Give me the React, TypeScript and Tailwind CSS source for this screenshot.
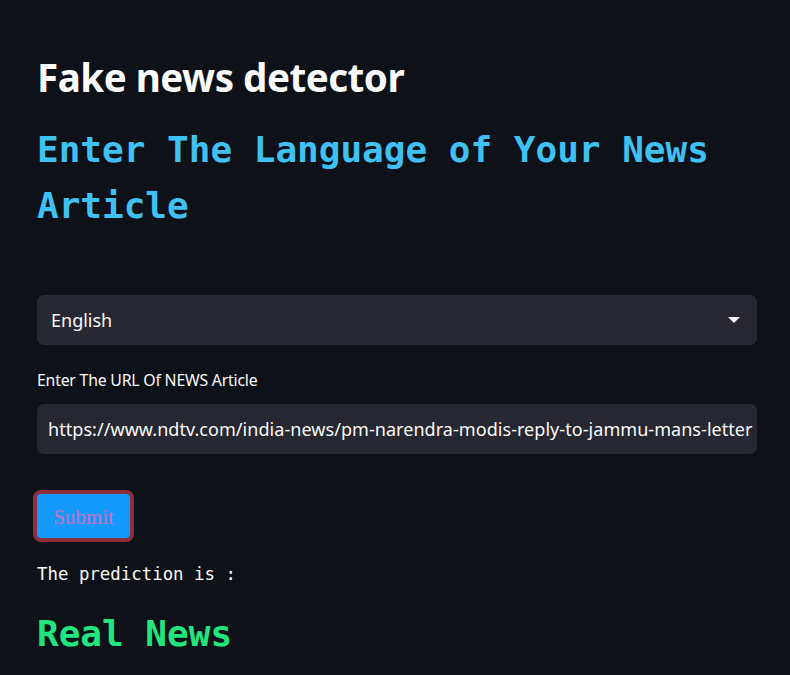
import React from "react";

export default function App() {
  return (
    <div className="min-h-[675px] w-full bg-[#0e1117] text-white">
      <div className="px-[37px] pt-[52px]">
        <h1 className="text-[38.6px] font-bold leading-[50px] text-[#fafafa] [font-family:'Noto_Sans',sans-serif] tracking-[-0.5px]">
          Fake news detector
        </h1>
        <h2 className="mt-[20px] text-[36px] font-bold leading-[56px] text-[#3fc1f3] [font-family:'DejaVu_Sans_Mono',monospace]">
          Enter The Language of Your News Article
        </h2>
        <div className="mt-[61px] flex h-[50px] w-[720px] items-center justify-between rounded-[7px] bg-[#262730] pl-[14px] pr-[17px]">
          <span className="text-[18px] text-[#fafafa] [font-family:'Noto_Sans',sans-serif]">English</span>
          <svg width="12" height="7" viewBox="0 0 12 7">
            <path d="M0 0 L12 0 L6 6 Z" fill="#fafafa" />
          </svg>
        </div>
        <div className="mt-[24px] text-[15.8px] leading-[22px] text-[#fafafa] [font-family:'Noto_Sans',sans-serif] tracking-[-0.2px]">
          Enter The URL Of NEWS Article
        </div>
        <div className="mt-[13px] flex h-[50px] w-[720px] items-center overflow-hidden rounded-[7px] bg-[#262730] pl-[11px] pr-[2px]">
          <span className="whitespace-nowrap text-[18px] text-[#fafafa] [font-family:'Noto_Sans',sans-serif] tracking-[0.05px]">
            https://www.ndtv.com/india-news/pm-narendra-modis-reply-to-jammu-mans-letter
          </span>
        </div>
        <button className="ml-[-4px] mt-[36px] flex h-[52px] w-[101px] items-center justify-center rounded-[8px] border-[4px] border-[#8c2f3b] bg-[#1499fd] pt-[3px] text-[21px] text-[#c56fc0] [font-family:'Liberation_Serif',serif]">
          Submit
        </button>
        <div className="mt-[20px] text-[17.4px] leading-[24px] text-[#fafafa] [font-family:'DejaVu_Sans_Mono',monospace]">
          The prediction is :
        </div>
        <div className="mt-[23px] text-[36px] font-bold leading-[50px] text-[#21e67f] [font-family:'DejaVu_Sans_Mono',monospace]">
          Real News
        </div>
      </div>
    </div>
  );
}
